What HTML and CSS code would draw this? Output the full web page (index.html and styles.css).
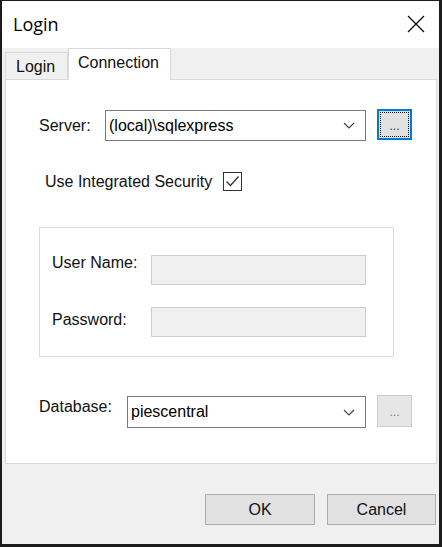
FILE: index.html
```html
<!DOCTYPE html>
<html>
<head>
<meta charset="utf-8">
<link rel="stylesheet" href="styles.css">
</head>
<body>
<div class="window">
  <div class="titlebar">
    <span class="title">Login</span>
    <svg class="close" width="18" height="18" viewBox="0 0 18 18"><path d="M1 1 L17 17 M17 1 L1 17" stroke="#000" stroke-width="1.1" fill="none"/></svg>
  </div>
  <div class="tabstrip">
    <div class="tab">Login</div>
    <div class="tab active">Connection</div>
  </div>
  <div class="panel">
    <div class="row server-row">
      <span class="lbl lbl-server">Server:</span>
      <div class="combo combo-server">
        <span class="combo-text">(local)\sqlexpress</span>
        <svg class="chev" width="12" height="7" viewBox="0 0 12 7"><path d="M1 1 L6 6 L11 1" stroke="#444" stroke-width="1.2" fill="none"/></svg>
      </div>
      <div class="browse focused"><span>...</span></div>
    </div>
    <div class="row check-row">
      <span class="lbl lbl-check">Use Integrated Security</span>
      <div class="checkbox">
        <svg width="17" height="17" viewBox="0 0 17 17"><path d="M2.5 8.5 L6.5 12.5 L14.5 3.5" stroke="#333" stroke-width="1.3" fill="none"/></svg>
      </div>
    </div>
    <div class="group">
      <div class="row grow grow-user">
        <span class="lbl lbl-group lbl-user">User Name:</span>
        <div class="textbox"></div>
      </div>
      <div class="row grow grow-pass">
        <span class="lbl lbl-group lbl-pass">Password:</span>
        <div class="textbox"></div>
      </div>
    </div>
    <div class="row db-row">
      <span class="lbl lbl-db">Database:</span>
      <div class="combo combo-db">
        <span class="combo-text">piescentral</span>
        <svg class="chev" width="12" height="7" viewBox="0 0 12 7"><path d="M1 1 L6 6 L11 1" stroke="#444" stroke-width="1.2" fill="none"/></svg>
      </div>
      <div class="browse plain"><span>...</span></div>
    </div>
  </div>
  <div class="footer">
    <div class="btn btn-ok">OK</div>
    <div class="btn btn-cancel">Cancel</div>
  </div>
</div>
</body>
</html>
```

FILE: styles.css
```css
* { box-sizing: border-box; }
html, body { margin: 0; padding: 0; background: #1a1a1a; }
body { font-family: "Liberation Sans", Arial, sans-serif; font-size: 16px; color: #000; }

.window {
  width: 442px;
  height: 547px;
  border-style: solid;
  border-color: #1c1c1c;
  border-width: 1px 3px 3px 2px;
  background: #f0f0f0;
  display: flex;
  flex-direction: column;
}

.titlebar {
  height: 47px;
  background: #fff;
  display: flex;
  align-items: center;
  justify-content: space-between;
  padding: 0 14px 0 11px;
}
.title {
  font-family: "Open Sans", "Noto Sans", sans-serif;
  font-size: 18px;
  color: #000;
  margin-top: -2px;
}
.close { display: block; margin-top: -1px; }

.tabstrip {
  height: 31px;
  display: flex;
  align-items: flex-end;
  padding-left: 3px;
  position: relative;
  z-index: 1;
}
.tab {
  height: 27px;
  padding: 0 10px;
  border: 1px solid #d9d9d9;
  border-bottom: none;
  background: #f0f0f0;
  line-height: 28px;
  width: 63px;
  color: #111;
}
.tab.active {
  height: 32px;
  width: 103px;
  margin-bottom: -1px;
  background: #fff;
  padding: 0 9px;
  line-height: 28px;
  border-left: 1px solid #d9d9d9;
  border-right: 1px solid #d9d9d9;
}

.panel {
  height: 385px;
  margin: 0 2px 0 3px;
  background: #fff;
  border: 1px solid #d9d9d9;
  padding-left: 33px;
}

.row { display: flex; align-items: center; }
.lbl { white-space: nowrap; line-height: 18px; color: #111; }

.server-row { margin-top: 30px; height: 31px; }
.lbl-server { width: 66px; }

.combo {
  height: 31px;
  border: 1px solid #7a7a7a;
  background: #fff;
  display: flex;
  align-items: center;
  justify-content: space-between;
  padding: 0 10px 0 3px;
}
.combo-server { width: 261px; }
.combo-text { line-height: 18px; }
.chev { display: block; }

.browse {
  width: 35px;
  height: 31px;
  margin-left: 11px;
  display: flex;
  align-items: center;
  justify-content: center;
  font-size: 12px;
}
.browse span { margin-top: 2px; }
.browse.focused {
  align-self: flex-start;
  margin-top: -1px;
  background: #e1e1e1;
  border: 2px solid #0078d7;
  outline: 1px dotted #111;
  outline-offset: -4px;
  color: #333;
}
.browse.plain {
  height: 32px;
  align-self: flex-start;
  background: #e6e6e6;
  border: 1px solid #cccccc;
  color: #777;
}

.check-row { margin-top: 31px; height: 19px; padding-left: 6px; }
.lbl-check { width: 178px; }
.checkbox {
  width: 19px;
  height: 19px;
  border: 1px solid #333;
  background: #fff;
}
.checkbox svg { display: block; }

.group {
  width: 355px;
  height: 130px;
  margin-top: 36px;
  border: 1px solid #dcdcdc;
  padding: 27px 0 0 12px;
}
.grow { align-items: flex-start; height: 30px; }
.grow-pass { margin-top: 22px; }
.lbl-group { width: 99px; }
.lbl-user { margin-top: -1px; }
.lbl-pass { margin-top: 4px; }
.textbox {
  width: 215px;
  height: 30px;
  background: #f0f0f0;
  border: 1px solid #cccccc;
}

.db-row { margin-top: 38px; height: 33px; align-items: flex-start; }
.lbl-db { width: 88px; margin-top: 3px; }
.combo-db { width: 239px; height: 32px; margin-top: 1px; }

.footer {
  flex: 1;
  display: flex;
  justify-content: flex-end;
  align-items: flex-start;
  padding: 30px 3px 0 0;
  gap: 12px;
}
.btn {
  height: 31px;
  background: #e1e1e1;
  border: 1px solid #adadad;
  display: flex;
  align-items: center;
  justify-content: center;
  line-height: 18px;
  color: #111;
}
.btn-ok { width: 110px; }
.btn-cancel { width: 109px; }
```
